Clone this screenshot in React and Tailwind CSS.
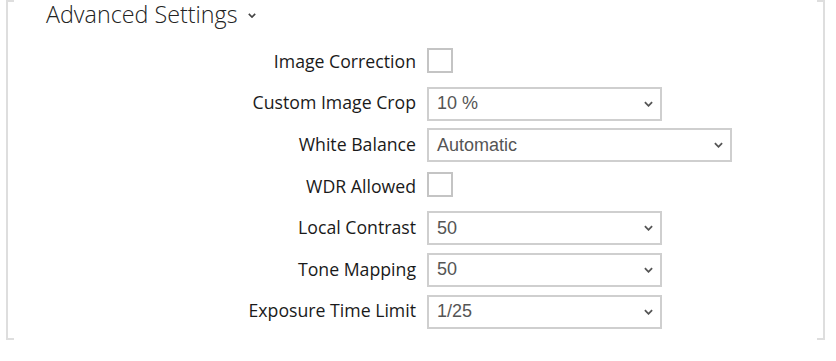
import { useState } from 'react';

const rows = [
  { label: 'Image Correction', type: 'check' },
  { label: 'Custom Image Crop', type: 'select', value: '10 %', wide: false },
  { label: 'White Balance', type: 'select', value: 'Automatic', wide: true },
  { label: 'WDR Allowed', type: 'check' },
  { label: 'Local Contrast', type: 'select', value: '50', wide: false },
  { label: 'Tone Mapping', type: 'select', value: '50', wide: false },
  { label: 'Exposure Time Limit', type: 'select', value: '1/25', wide: false },
];

function Chevron({ className }) {
  return (
    <svg viewBox="0 0 10 6" className={className} fill="none">
      <polyline points="1,1 5,5 9,1" stroke="currentColor" strokeWidth="2" />
    </svg>
  );
}

function Check() {
  const [on, setOn] = useState(false);
  return (
    <button
      onClick={() => setOn(!on)}
      className="w-[26px] h-[25px] border-2 border-[#c4c4c4] bg-white"
    />
  );
}

function Select({ value, wide }) {
  return (
    <div
      className={`${wide ? 'w-[305px]' : 'w-[235px]'} h-[34px] border-2 border-[#cfcfcf] bg-white flex items-center justify-between pl-[8px] pr-[7px]`}
    >
      <span className="text-[18px] text-[#555] font-['Liberation_Sans',Arial,sans-serif]">{value}</span>
      <Chevron className="w-[9px] h-[6px] text-[#555]" />
    </div>
  );
}

export default function App() {
  return (
    <div className="w-[836px] h-[361px] bg-white pt-[10px] pl-[6px] font-['Open_Sans',sans-serif]">
      <div className="relative w-[819px] h-[340px] border-x-2 border-[#dedede]">
        {/* corner ticks */}
        <span className="absolute -left-[2px] top-0 w-[8px] h-[2px] bg-[#dedede]" />
        <span className="absolute -right-[2px] top-0 w-[8px] h-[2px] bg-[#dedede]" />
        <span className="absolute -left-[2px] bottom-0 w-[8px] h-[2px] bg-[#dedede]" />
        <span className="absolute -right-[2px] bottom-0 w-[8px] h-[2px] bg-[#dedede]" />

        <div className="-mt-[10px] ml-[38px] h-[28px] flex items-center gap-[10px] text-[#222]">
          <span className="text-[23.3px] font-light leading-[28px]">Advanced Settings</span>
          <Chevron className="w-[8px] h-[5px] text-[#444] mt-[2px]" />
        </div>

        <div className="mt-[17px] flex flex-col gap-[7.6px]">
          {rows.map((r) => (
            <div key={r.label} className="h-[34px] flex items-center">
              <div className="w-[408px] -mt-[2px] text-right text-[17.7px] text-[#1a1a1a]">{r.label}</div>
              <div className="ml-[11px]">
                {r.type === 'check' ? <Check /> : <Select value={r.value} wide={r.wide} />}
              </div>
            </div>
          ))}
        </div>
      </div>
    </div>
  );
}
